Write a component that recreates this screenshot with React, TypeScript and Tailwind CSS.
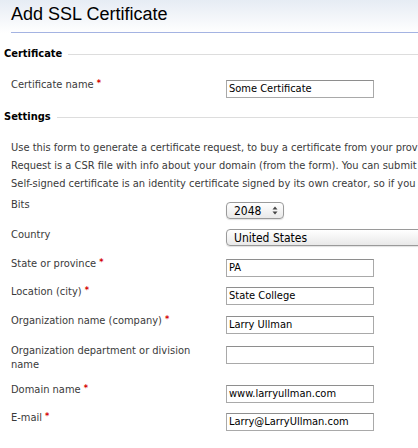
import React from 'react';

const body = "font-['DejaVu_Sans_Condensed','DejaVu_Sans',sans-serif]";

const Req = () => (
    <span className="ml-[3px] align-top text-[9px] leading-[10px] font-bold text-[#d40000]">*</span>
);

const Section = ({ title, className }: { title: string; className: string }) => (
    <div className={`flex items-center ${className}`}>
        <span className="pl-[4px] pr-[6px] text-[11px] leading-[14px] font-bold text-black">{title}</span>
        <div className="flex-1 h-px bg-[#dddddd]" />
    </div>
);

const TextField = ({ value }: { value: string }) => (
    <div className="mt-[2px] w-[148px] shrink-0 h-[18px] border border-[#a9a9a9] border-t-[#8e8e8e] bg-white px-[2px] text-[11px] leading-[16px] text-black whitespace-nowrap overflow-hidden">
        {value}
    </div>
);

const fields: { label: string; required: boolean; value: string; row: string }[] = [
    { label: 'State or province', required: true, value: 'PA', row: 'mt-[11px]' },
    { label: 'Location (city)', required: true, value: 'State College', row: 'mt-[8px]' },
    { label: 'Organization name (company)', required: true, value: 'Larry Ullman', row: 'mt-[9px]' },
    { label: 'Organization department or division name', required: false, value: '', row: 'mt-[10px]' },
    { label: 'Domain name', required: true, value: 'www.larryullman.com', row: 'mt-[11px]' },
    { label: 'E-mail', required: true, value: 'Larry@LarryUllman.com', row: 'mt-[8px]' },
];

export default function App() {
    return (
        <div className={`w-full h-[448px] overflow-hidden bg-white ${body}`}>
            <div className="h-[33px] bg-gradient-to-b from-[#e6ecf4] to-white">
                <div className="ml-[11px] h-[33px] border-b border-[#a4b3e2] pt-[3px]">
                    <h1 className="font-['Liberation_Sans',Arial,sans-serif] text-[18px] leading-[22px] text-black">
                        Add SSL Certificate
                    </h1>
                </div>
            </div>

            <Section title="Certificate" className="mt-[14px]" />

            <div className="mt-[17px] flex items-start pl-[11px]">
                <div className="w-[215px] shrink-0 text-[11px] leading-[14px] text-[#3a3a3a]">
                    Certificate name<Req />
                </div>
                <TextField value="Some Certificate" />
            </div>

            <Section title="Settings" className="mt-[12px]" />

            <div className="mt-[15px] pl-[11px] text-[11px] leading-[18px] text-[#3a3a3a] whitespace-nowrap">
                <p>Use this form to generate a certificate request, to buy a certificate from your provider, or to create a self-signed one.</p>
                <p>Request is a CSR file with info about your domain (from the form). You can submit this file to a certificate authority.</p>
                <p>Self-signed certificate is an identity certificate signed by its own creator, so if you use it browsers will warn visitors.</p>
            </div>

            <div className="mt-[5px] flex items-start pl-[11px]">
                <div className="w-[215px] shrink-0 text-[11px] leading-[14px] text-[#3a3a3a]">Bits</div>
                <div className="mt-[4px] w-[58px] shrink-0 h-[17px] flex items-center justify-between rounded-[4px] border border-[#9a9a9a] bg-gradient-to-b from-white to-[#e9e9e9] pl-[7px] pr-[5px] shadow-[0_1px_1px_rgba(0,0,0,0.12)]">
                    <span className="text-[12px] leading-[14px] text-black">2048</span>
                    <svg width="6" height="9" viewBox="0 0 6 9">
                        <path d="M3 0.5 L5.5 3.5 H0.5 Z" fill="#444" />
                        <path d="M3 8.5 L5.5 5.5 H0.5 Z" fill="#444" />
                    </svg>
                </div>
            </div>

            <div className="mt-[9px] flex items-start pl-[11px]">
                <div className="w-[215px] shrink-0 text-[11px] leading-[14px] text-[#3a3a3a]">Country</div>
                <div className="mt-[1px] w-[240px] shrink-0 h-[17px] flex items-center rounded-l-[4px] border border-[#9a9a9a] bg-gradient-to-b from-white to-[#e9e9e9] pl-[7px] shadow-[0_1px_1px_rgba(0,0,0,0.12)]">
                    <span className="text-[12px] leading-[14px] text-black">United States</span>
                </div>
            </div>

            {fields.map((f) => (
                <div key={f.label} className={`${f.row} flex items-start pl-[11px]`}>
                    <div className="w-[215px] shrink-0">
                        <div className="w-[190px] text-[11px] leading-[14px] text-[#3a3a3a]">
                            {f.label}
                            {f.required && <Req />}
                        </div>
                    </div>
                    <TextField value={f.value} />
                </div>
            ))}
        </div>
    );
}
